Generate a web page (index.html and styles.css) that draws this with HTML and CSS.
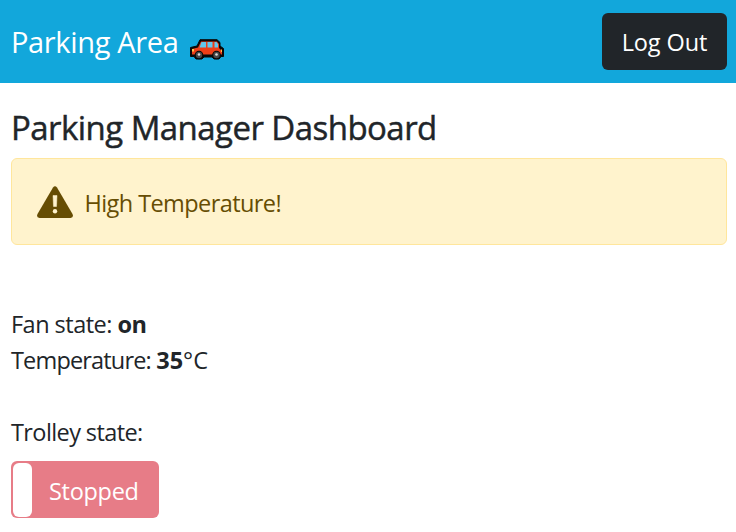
FILE: index.html
```html
<!DOCTYPE html>
<html lang="en">
<head>
<meta charset="utf-8">
<title>Parking Area</title>
<link rel="stylesheet" href="styles.css">
</head>
<body>
<header class="navbar">
  <a class="brand"><span class="brand-text">Parking Area</span>
    <svg class="car" viewBox="0 0 34 21">
      <path d="M10 .7H27L30 3.500V7L33.500 9.500V17.500H31L29 20H24L22 18H14L12 20H6L4 17.500H.5V8.500L7 7Z" fill="#080808" stroke="#080808" stroke-linejoin="round"/>
      <path d="M11 2.500H27L29 5V9L32 12V15.500H2V10L8 8.500Z" fill="#ed3e17"/>
      <path d="M11.500 3H16V8.500H9.500Z" fill="#62c8ed"/>
      <path d="M17.500 3H22.500V8.500H17.500Z" fill="#62c8ed"/>
      <path d="M24.500 3H26.500L28 5V8.500H24.500Z" fill="#62c8ed"/>
      <path d="M2 10H4V12.500H2ZM31 10.500H32V13H31Z" fill="#ffc34d"/>
      <circle cx="9" cy="16" r="4.300" fill="#080808"/><circle cx="26.500" cy="16" r="4.300" fill="#080808"/>
      <circle cx="9" cy="16" r="3.200" fill="#484848"/><circle cx="26.500" cy="16" r="3.200" fill="#484848"/>
      <circle cx="9" cy="15.500" r="1.300" fill="#ddd"/><circle cx="26.500" cy="15.500" r="1.300" fill="#ddd"/>
    </svg>
  </a>
  <button class="btn logout"><span>Log Out</span></button>
</header>
<main class="content">
  <h1 class="title">Parking Manager Dashboard</h1>
  <div class="alert">
    <svg class="warning" viewBox="0 0 36 32">
      <path d="M16 1.500Q18 -1 20 1.500L35.500 28Q37 31.500 33.500 32H2.500Q-1 31.500 .5 28Z" fill="#664d03"/>
      <path d="M16 9.500H20L19.500 20.500H16.500Z" fill="#fff3cd" stroke="#fff3cd" stroke-width=".5" stroke-linejoin="round"/>
      <circle cx="18" cy="25.300" r="2.200" fill="#fff3cd"/>
    </svg>
    <span class="alert-text">High Temperature!</span>
  </div>
  <div class="status">
    <p class="fan">Fan state: <b>on</b></p>
    <p class="temp"><span class="temp-label">Temperature: </span><b>35</b>°C</p>
  </div>
  <p class="trolley">Trolley state:</p>
  <button class="toggle"><i class="handle"></i><span class="toggle-text">Stopped</span></button>
</main>
</body>
</html>
```
FILE: styles.css
```css
* { box-sizing: border-box; }
body { margin: 0; background: #fff; color: #212529; font: 23.500px/36px "Open Sans", "Noto Sans", sans-serif; }
p, h1 { margin: 0; white-space: nowrap; }
button { font: inherit; color: #fff; border: 0; }
.navbar { height: 83px; padding: 0 9px 0 11px; background: #12a7db; color: #fff; display: flex; align-items: center; justify-content: space-between; }
.brand { display: flex; align-items: center; gap: 12px; font-size: 29px; letter-spacing: -.35px; }
.brand-text { white-space: nowrap; }
.car { width: 34px; height: 21px; margin-top: 15px; }
.btn { width: 125px; height: 57px; border-radius: 6px; background: #212529; padding: 1px 0 0; white-space: nowrap; letter-spacing: -.1px; }
.content { padding: 23px 9px 0 11px; }
.title { font-size: 33px; line-height: 43px; font-weight: 500; letter-spacing: -.55px; -webkit-text-stroke: .45px #212529; }
.alert { height: 87px; margin-top: 9px; padding: 1px 25px 0; border: 1px solid #ffe69c; border-radius: 6px; background: #fff3cd; color: #664d03; display: flex; align-items: center; gap: 11.500px; }
.warning { width: 36px; height: 32px; }
.alert-text { white-space: nowrap; letter-spacing: -.58px; padding-top: 2px; }
.status { margin-top: 61px; }
.fan { letter-spacing: -.52px; }
.temp-label { letter-spacing: -.83px; }
.trolley { margin-top: 36px; letter-spacing: -.6px; }
.toggle { width: 148px; height: 57px; margin-top: 11px; padding: 2px; border-radius: 6px; background: #e77c87; display: flex; align-items: center; }
.handle { width: 19px; height: 54px; border-radius: 6px; background: #fff; margin-right: 17px; }
.toggle-text { letter-spacing: -.3px; padding-top: 2px; }
```
